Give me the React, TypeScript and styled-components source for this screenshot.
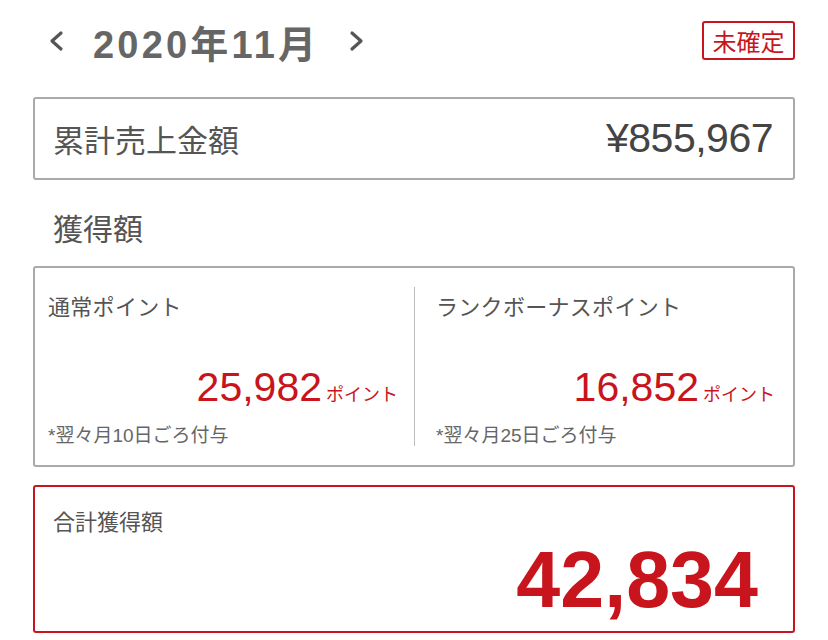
import React from 'react'
import styled, { createGlobalStyle } from 'styled-components'

const red = '#c8141c'
const font = `"Liberation Sans", "Noto Sans CJK JP", sans-serif`

const GlobalStyle = createGlobalStyle`
  html, body {
    margin: 0;
    padding: 0;
    background: #fff;
  }
  body {
    font-family: ${font};
    color: #444;
  }
`

const Page = styled.div`
  width: 828px;
  height: 640px;
  box-sizing: border-box;
  padding: 0 33px;
  overflow: hidden;
`

const Header = styled.div`
  display: flex;
  align-items: center;
  justify-content: space-between;
  height: 82px;
  padding-left: 15px;
  box-sizing: border-box;
`

const MonthNav = styled.div`
  display: flex;
  align-items: center;
`

const NavButton = styled.button`
  display: flex;
  align-items: center;
  justify-content: center;
  width: 16px;
  height: 24px;
  padding: 0;
  border: none;
  background: none;
  cursor: pointer;
`

const MonthTitle = styled.h1`
  margin: 0 30px 0 29px;
  font-size: 38px;
  font-weight: bold;
  color: #666;
  letter-spacing: 3.2px;
`

const StatusBadge = styled.div`
  width: 93px;
  height: 39px;
  box-sizing: border-box;
  border: 2px solid ${red};
  border-radius: 3px;
  display: flex;
  align-items: center;
  justify-content: center;
  color: ${red};
  font-size: 24px;
  margin-top: -1px;
`

const Card = styled.div<{ $accent?: boolean }>`
  box-sizing: border-box;
  border: 2px solid ${({ $accent }) => ($accent ? red : '#aaa')};
  border-radius: 3px;
  background: #fff;
`

const SalesCard = styled(Card)`
  height: 83px;
  margin-top: 15px;
  display: flex;
  align-items: center;
  justify-content: space-between;
  padding: 0 20px 0 18px;
`

const SalesLabel = styled.span`
  font-size: 31px;
  color: #555;
`

const SalesValue = styled.span`
  font-size: 41px;
  color: #444;
  letter-spacing: -0.5px;
`

const SectionTitle = styled.h2`
  margin: 0;
  height: 86px;
  box-sizing: border-box;
  display: flex;
  align-items: center;
  padding: 8px 0 0 20px;
  font-size: 30px;
  font-weight: normal;
  color: #555;
`

const PointsCard = styled(Card)`
  height: 201px;
  display: grid;
  grid-template-columns: 379px 1fr;
  padding: 19px 0;
`

const PointsColumn = styled.div<{ $first?: boolean }>`
  display: flex;
  flex-direction: column;
  padding: ${({ $first }) => ($first ? '0 16px 0 13px' : '0 18px 0 21px')};
  border-left: ${({ $first }) => ($first ? 'none' : '1px solid #bbb')};
`

const PointsLabel = styled.div`
  font-size: 22px;
  color: #555;
  line-height: 1;
  margin-top: 10px;
  letter-spacing: 0.3px;
`

const PointsValue = styled.div`
  margin-top: 48px;
  display: flex;
  justify-content: flex-end;
  align-items: baseline;
  color: ${red};
`

const PointsNumber = styled.span`
  font-size: 41px;
  line-height: 1;
`

const PointsUnit = styled.span`
  font-size: 18px;
  margin-left: 4px;
`

const PointsNote = styled.div`
  margin-top: 18px;
  font-size: 19px;
  color: #666;
  line-height: 1;
`

const TotalCard = styled(Card)`
  height: 148px;
  margin-top: 18px;
  padding: 25px 35px 0 18px;
  display: flex;
  flex-direction: column;
`

const TotalLabel = styled.div`
  font-size: 22px;
  color: #555;
  line-height: 1;
`

const TotalValue = styled.div`
  align-self: flex-end;
  margin-top: 6px;
  font-size: 79px;
  font-weight: bold;
  color: ${red};
  line-height: 1;
`

const Chevron: React.FC<{ dir: 'left' | 'right' }> = ({ dir }) => (
  <svg width="16" height="24" viewBox="0 0 16 24">
    <path
      d={dir === 'left' ? 'M13 4 L4 12 L13 20' : 'M3 4 L12 12 L3 20'}
      fill="none"
      stroke="#555"
      strokeWidth="3.2"
      strokeLinecap="round"
      strokeLinejoin="round"
    />
  </svg>
)

interface PointItem {
  label: string
  value: string
  note: string
}

const points: PointItem[] = [
  { label: '通常ポイント', value: '25,982', note: '*翌々月10日ごろ付与' },
  { label: 'ランクボーナスポイント', value: '16,852', note: '*翌々月25日ごろ付与' },
]

const App: React.FC = () => {
  return (
    <Page>
      <GlobalStyle />
      <Header>
        <MonthNav>
          <NavButton aria-label="前月">
            <Chevron dir="left" />
          </NavButton>
          <MonthTitle>2020年11月</MonthTitle>
          <NavButton aria-label="翌月">
            <Chevron dir="right" />
          </NavButton>
        </MonthNav>
        <StatusBadge>未確定</StatusBadge>
      </Header>

      <SalesCard>
        <SalesLabel>累計売上金額</SalesLabel>
        <SalesValue>¥855,967</SalesValue>
      </SalesCard>

      <SectionTitle>獲得額</SectionTitle>

      <PointsCard>
        {points.map((p, i) => (
          <PointsColumn key={p.label} $first={i === 0}>
            <PointsLabel>{p.label}</PointsLabel>
            <PointsValue>
              <PointsNumber>{p.value}</PointsNumber>
              <PointsUnit>ポイント</PointsUnit>
            </PointsValue>
            <PointsNote>{p.note}</PointsNote>
          </PointsColumn>
        ))}
      </PointsCard>

      <TotalCard $accent>
        <TotalLabel>合計獲得額</TotalLabel>
        <TotalValue>42,834</TotalValue>
      </TotalCard>
    </Page>
  )
}

export default App
